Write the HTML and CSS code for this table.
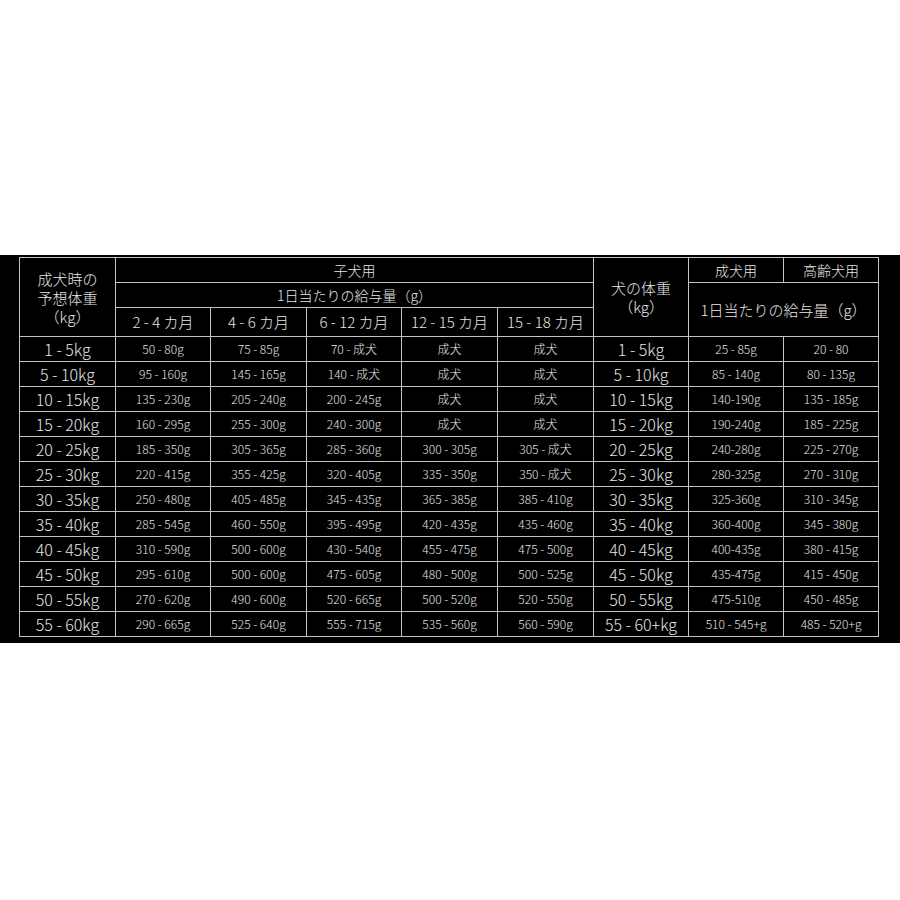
FILE: index.html
```html
<!DOCTYPE html>
<html lang="ja">
<head>
<meta charset="utf-8">
<link rel="stylesheet" href="styles.css">
</head>
<body>
<div class="band">
<table class="feed">
<colgroup>
<col class="c1"><col class="c2"><col class="c3"><col class="c4"><col class="c5"><col class="c6"><col class="c7"><col class="c8"><col class="c9">
</colgroup>
<thead>
<tr class="h1">
<th rowspan="3" class="corner">成犬時の<br>予想体重<br>（kg）</th>
<th colspan="5" class="grp">子犬用</th>
<th rowspan="3" class="corner2">犬の体重<br>（kg）</th>
<th class="grp">成犬用</th>
<th class="grp">高齢犬用</th>
</tr>
<tr class="h2">
<th colspan="5" class="grp">1日当たりの給与量（g）</th>
<th colspan="2" rowspan="2" class="amt">1日当たりの給与量（g）</th>
</tr>
<tr class="h3">
<th class="mo">2 - 4 カ月</th>
<th class="mo">4 - 6 カ月</th>
<th class="mo">6 - 12 カ月</th>
<th class="mo">12 - 15 カ月</th>
<th class="mo">15 - 18 カ月</th>
</tr>
</thead>
<tbody>
<tr><td class="w">1 - 5kg</td><td>50 - 80g</td><td>75 - 85g</td><td>70 - 成犬</td><td>成犬</td><td>成犬</td><td class="w">1 - 5kg</td><td>25 - 85g</td><td>20 - 80</td></tr>
<tr><td class="w">5 - 10kg</td><td>95 - 160g</td><td>145 - 165g</td><td>140 - 成犬</td><td>成犬</td><td>成犬</td><td class="w">5 - 10kg</td><td>85 - 140g</td><td>80 - 135g</td></tr>
<tr><td class="w">10 - 15kg</td><td>135 - 230g</td><td>205 - 240g</td><td>200 - 245g</td><td>成犬</td><td>成犬</td><td class="w">10 - 15kg</td><td>140-190g</td><td>135 - 185g</td></tr>
<tr><td class="w">15 - 20kg</td><td>160 - 295g</td><td>255 - 300g</td><td>240 - 300g</td><td>成犬</td><td>成犬</td><td class="w">15 - 20kg</td><td>190-240g</td><td>185 - 225g</td></tr>
<tr><td class="w">20 - 25kg</td><td>185 - 350g</td><td>305 - 365g</td><td>285 - 360g</td><td>300 - 305g</td><td>305 - 成犬</td><td class="w">20 - 25kg</td><td>240-280g</td><td>225 - 270g</td></tr>
<tr><td class="w">25 - 30kg</td><td>220 - 415g</td><td>355 - 425g</td><td>320 - 405g</td><td>335 - 350g</td><td>350 - 成犬</td><td class="w">25 - 30kg</td><td>280-325g</td><td>270 - 310g</td></tr>
<tr><td class="w">30 - 35kg</td><td>250 - 480g</td><td>405 - 485g</td><td>345 - 435g</td><td>365 - 385g</td><td>385 - 410g</td><td class="w">30 - 35kg</td><td>325-360g</td><td>310 - 345g</td></tr>
<tr><td class="w">35 - 40kg</td><td>285 - 545g</td><td>460 - 550g</td><td>395 - 495g</td><td>420 - 435g</td><td>435 - 460g</td><td class="w">35 - 40kg</td><td>360-400g</td><td>345 - 380g</td></tr>
<tr><td class="w">40 - 45kg</td><td>310 - 590g</td><td>500 - 600g</td><td>430 - 540g</td><td>455 - 475g</td><td>475 - 500g</td><td class="w">40 - 45kg</td><td>400-435g</td><td>380 - 415g</td></tr>
<tr><td class="w">45 - 50kg</td><td>295 - 610g</td><td>500 - 600g</td><td>475 - 605g</td><td>480 - 500g</td><td>500 - 525g</td><td class="w">45 - 50kg</td><td>435-475g</td><td>415 - 450g</td></tr>
<tr><td class="w">50 - 55kg</td><td>270 - 620g</td><td>490 - 600g</td><td>520 - 665g</td><td>500 - 520g</td><td>520 - 550g</td><td class="w">50 - 55kg</td><td>475-510g</td><td>450 - 485g</td></tr>
<tr><td class="w">55 - 60kg</td><td>290 - 665g</td><td>525 - 640g</td><td>555 - 715g</td><td>535 - 560g</td><td>560 - 590g</td><td class="w">55 - 60+kg</td><td>510 - 545+g</td><td>485 - 520+g</td></tr>
</tbody>
</table>
</div>
</body>
</html>
```

FILE: styles.css
```css
html, body {
  margin: 0;
  padding: 0;
  background: #ffffff;
}
body {
  width: 900px;
  height: 900px;
  font-family: "Noto Sans CJK JP", "Noto Sans", sans-serif;
}
.band {
  margin-top: 255px;
  height: 388px;
  background: #000000;
  padding: 2px 0 0 19px;
  box-sizing: border-box;
}
.feed {
  border-collapse: collapse;
  table-layout: fixed;
  width: 860px;
  color: #e6e6e6;
}
.c1 { width: 96px; }
.c2 { width: 95px; }
.c3 { width: 96px; }
.c4 { width: 95px; }
.c5 { width: 96px; }
.c6 { width: 96px; }
.c7 { width: 95px; }
.c8 { width: 95px; }
.c9 { width: 95px; }
.feed th, .feed td {
  border: 1px solid #c4c4c4;
  padding: 0;
  text-align: center;
  vertical-align: middle;
  font-weight: 300;
  white-space: nowrap;
}
.h1 { height: 25px; }
.h2 { height: 25px; }
.h3 { height: 29px; }
.grp {
  font-size: 14px;
  line-height: 16px;
}
.corner {
  font-size: 15px;
  line-height: 19px;
  padding-bottom: 2px;
}
.corner2 {
  font-size: 15px;
  line-height: 19px;
  padding-top: 6px;
}
.amt {
  font-size: 15px;
  line-height: 18px;
}
.mo {
  font-size: 15px;
  line-height: 18px;
}
.feed tbody tr { height: 25px; }
.feed td {
  font-size: 12px;
  line-height: 14px;
}
.feed td.w {
  font-size: 16px;
  line-height: 18px;
}
```
